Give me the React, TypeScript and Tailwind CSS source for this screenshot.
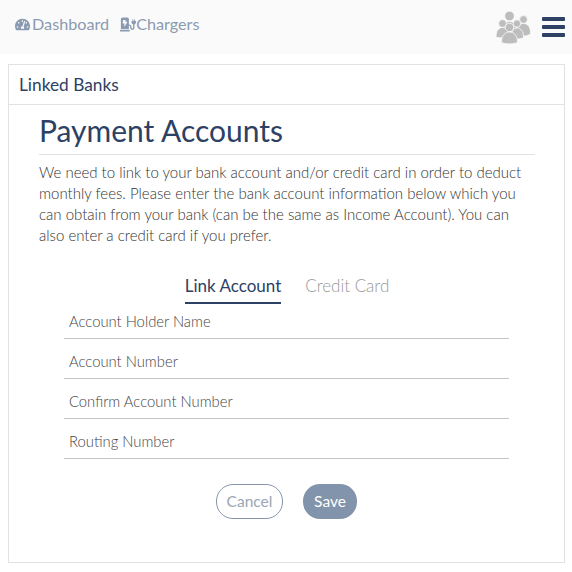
import React from 'react';
import { FaTachometerAlt, FaChargingStation } from 'react-icons/fa';

const PeopleIcon = () => (
  <svg width="35" height="33" viewBox="0 0 35 33" fill="#bdbdbd" stroke="#fafafa" strokeWidth="0.8">
    <circle cx="13.500" cy="5" r="4.800" />
    <path d="M7 18c0-4.500 2.500-7.500 6.500-7.500s6.500 3 6.500 7.500z" />
    <circle cx="27.500" cy="8.500" r="3.900" />
    <path d="M20 23c0-7 3-10.500 7.500-10.500s7 3.500 7 9.500c0 1.500-3 3-7 3z" />
    <circle cx="6.500" cy="12.500" r="3.900" />
    <path d="M0 26c0-6 2.500-9.500 6.500-9.500s6.500 3.500 6.500 9.500c0 1-13 1-13 0z" />
    <circle cx="21" cy="12.500" r="3.700" />
    <path d="M15 28c0-7 2-11 6-11s6.500 3.500 6.500 9c0 1.500-5 2.500-12.500 2z" />
    <circle cx="13.500" cy="16.500" r="4.200" />
    <path d="M5.500 31c0-6.500 3.500-10 8-10s8 3.500 8 10c0 2.500-16 2.500-16 0z" />
  </svg>
);

const fields = ['Account Holder Name', 'Account Number', 'Confirm Account Number', 'Routing Number'];

export default function App() {
  return (
    <div className="w-[572px] h-[572px] bg-white overflow-hidden font-['Lato','Open_Sans',sans-serif] text-[#2c4163]">
      <header className="h-[54px] bg-[#fafafa] flex items-center justify-between pl-[15px] pr-[7px]">
        <nav className="flex items-center gap-[11px] text-[16.200px] text-[#8a9ab0] -mt-[5px]">
          <a className="flex items-center">
            <FaTachometerAlt className="w-[15px] h-[15px] mr-[2px]" />
            Dashboard
          </a>
          <a className="flex items-center">
            <FaChargingStation className="w-[16px] h-[15px]" />
            Chargers
          </a>
        </nav>
        <div className="flex items-center gap-[11px] mt-[1px]">
          <PeopleIcon />
          <div className="flex flex-col gap-[4px] w-[23px] -mt-[2px]">
            <span className="h-[4px] rounded-[1px] bg-[#2c4163]" />
            <span className="h-[4px] rounded-[1px] bg-[#2c4163]" />
            <span className="h-[4px] rounded-[1px] bg-[#2c4163]" />
          </div>
        </div>
      </header>

      <section className="mt-[10px] ml-[8px] w-[557px] h-[499px] border border-[#e2e2e2]">
        <div className="h-[40px] border-b border-[#e2e2e2] pl-[10px] flex items-center text-[17.300px]">
          Linked Banks
        </div>
        <div className="pl-[30px] pr-[29px]">
          <h1 className="h-[50px] pt-[7px] border-b border-[#e2e2e2] text-[30px] leading-[36px]">Payment Accounts</h1>
          <p className="mt-[7px] text-[15px] leading-[21px] font-light text-[#333333]">
            We need to link to your bank account and/or credit card in order to deduct monthly fees. Please enter the bank
            account information below which you can obtain from your bank (can be the same as Income Account). You can also
            enter a credit card if you prefer.
          </p>
          <div className="mt-[19px] flex justify-center gap-[24px] text-[17px]">
            <span className="h-[39px] pt-[8px] border-b-2 border-[#2c4163]">Link Account</span>
            <span className="h-[39px] pt-[8px] font-light text-[#999999]">Credit Card</span>
          </div>
          <form className="-mt-[5px] ml-[25px] w-[445px]">
            {fields.map((f) => (
              <div key={f} className="h-[40px] pl-[5px] pb-[6px] flex items-end border-b border-[#c4c4c4] text-[14.800px] font-light text-[#444444]">
                {f}
              </div>
            ))}
            <div className="mt-[25px] flex justify-center gap-[20px] text-[15.500px]">
              <button type="button" className="w-[67px] h-[35px] rounded-[17px] border border-[#8596ab] text-[#9aa6b5] bg-white">
                Cancel
              </button>
              <button type="button" className="w-[54px] h-[35px] rounded-[17px] bg-[#8294ab] text-white">
                Save
              </button>
            </div>
          </form>
        </div>
      </section>
    </div>
  );
}
